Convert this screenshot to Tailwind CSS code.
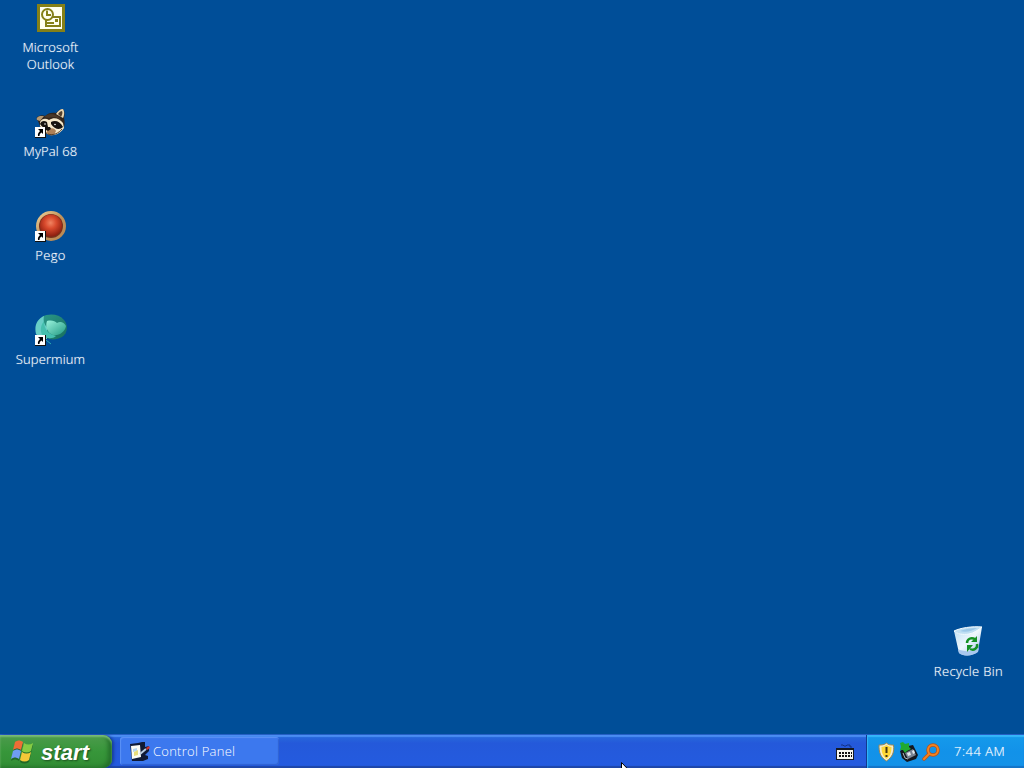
<!DOCTYPE html>
<html lang="en">
<head>
    <meta charset="UTF-8">
    <meta name="viewport" content="width=device-width, initial-scale=1.0">
    <title>Desktop</title>
    <script src="https://cdn.jsdelivr.net/npm/@tailwindcss/browser@4"></script>
</head>
<body class="bg-[#004e98] font-['Open_Sans','Noto_Sans',sans-serif] font-light tracking-[.12px] text-white [text-shadow:0_0_1px_#ffffff90] overflow-hidden select-none">

    <!-- shortcut arrow shared by the desktop icons -->
    <svg class="hidden">
        <symbol id="shortcut" viewBox="0 0 11 11">
            <path d="M0 0h11v11H0z" fill="#111"/>
            <path d="M0 0h10v10H0z" fill="#fff"/>
            <path d="M3 2h5v5L6.500 5.500C5 6.500 4.500 7.500 4.500 9H3C2.500 7 3.500 5.500 5 4z" fill="#000"/>
        </symbol>
    </svg>

    <div class="h-screen flex flex-col">
        <main class="flex-1 flex justify-between">
            <!-- left column -->
            <div class="w-[101px] pt-[2px] flex flex-col">
                <div class="h-[104px] flex flex-col items-center">
                    <svg class="w-8 h-8" viewBox="0 0 32 32">
                        <rect x="2" y="2" width="28" height="28" fill="#858018"/>
                        <rect x="5" y="5" width="22" height="22" fill="#fffff0"/>
                        <g fill="none" stroke="#858018" stroke-width="2">
                            <rect x="11" y="15" width="14" height="9" fill="#fffff0"/>
                            <circle cx="12.500" cy="12.500" r="5.500" fill="#fffff0"/>
                            <path d="M12 8.500V13h4M12 21h7"/>
                        </g>
                        <rect x="20" y="17" width="3" height="3" fill="#858018"/>
                    </svg>
                    <span class="mt-[5px] text-[13px] leading-[17px] text-center">Microsoft<br>Outlook</span>
                </div>

                <div class="h-[104px] flex flex-col items-center">
                    <svg class="w-8 h-8" viewBox="0 0 32 32">
                        <path d="M3 15c-2-2-2-4 1-5 2-1 4-1 6 0 3-3 7-4 11-3 2-2 4-4 7-4 2 2 2 6 1 9 1 4 1 8-1 11-3 3-6 5-11 6-6 0-10-5-12-9z" fill="#33261c"/>
                        <path d="M21 8c2-3 4-5 7-5 2 3 1 7 0 9z" fill="#e9d7b3"/>
                        <path d="M23 8c1-2 3-3 4-3 1 2 0 4-1 6z" fill="#54402d"/>
                        <path d="M2 14c-1-2 0-3 3-4h4l-4 5z" fill="#b79a72"/>
                        <path d="M9 11c4-4 10-4 15 0l3 4c-5-4-9-5-13-3z" fill="#4a3828"/>
                        <path d="M5 16c2-4 6-4 9-2 5-3 10-2 14 3l1 5c-2 3-5 6-10 7-7 0-11-5-14-9z" fill="#f5e8ca"/>
                        <path d="M5 18c1-3 4-4 7-2l1 5c-3 2-5 1-8-3zM16 16c4-2 9-1 12 5-3 3-8 3-12-3z" fill="#17130f"/>
                        <circle cx="10" cy="18" r=".8" fill="#fff"/>
                        <circle cx="20" cy="18.500" r=".8" fill="#fff"/>
                        <path d="M13 24c3-3 7-2 8 1l-2 4c-3 1-6 0-8-2z" fill="#ad8057"/>
                        <path d="M11 21h4l1 2-3 2-2-1z" fill="#17120e"/>
                        <path d="M13 28c5 2 11-1 14-5" fill="none" stroke="#56402a"/>
                        <use href="#shortcut" x="0" y="21" width="11" height="11"/>
                    </svg>
                    <span class="mt-[5px] text-[13px] leading-[17px]">MyPal 68</span>
                </div>

                <div class="h-[104px] flex flex-col items-center">
                    <svg class="w-8 h-8" viewBox="0 0 32 32">
                        <defs>
                            <linearGradient id="rim" x1="0" y1="0" x2="1" y2="1">
                                <stop offset="0" stop-color="#f0d49c"/>
                                <stop offset=".5" stop-color="#c1935b"/>
                                <stop offset="1" stop-color="#b88550"/>
                            </linearGradient>
                            <radialGradient id="ruby" cx=".48" cy=".38" r=".65">
                                <stop offset="0" stop-color="#f08462"/>
                                <stop offset=".4" stop-color="#d94a2d"/>
                                <stop offset="1" stop-color="#84190c"/>
                            </radialGradient>
                        </defs>
                        <circle cx="16" cy="16" r="15" fill="url(#rim)"/>
                        <circle cx="16" cy="16" r="12" fill="#79311c"/>
                        <circle cx="16" cy="15.500" r="11" fill="url(#ruby)"/>
                        <use href="#shortcut" x="0" y="21" width="11" height="11"/>
                    </svg>
                    <span class="mt-[5px] text-[13px] leading-[17px] tracking-[.4px]">Pego</span>
                </div>

                <div class="h-[104px] flex flex-col items-center">
                    <svg class="w-8 h-8" viewBox="0 0 32 32">
                        <defs>
                            <linearGradient id="teal" x1="0" y1="0" x2="1" y2="1">
                                <stop offset="0" stop-color="#2b988a"/>
                                <stop offset="1" stop-color="#176e5c"/>
                            </linearGradient>
                            <linearGradient id="mint" x1="0" y1="0" x2="1" y2="1">
                                <stop offset="0" stop-color="#9af2dc"/>
                                <stop offset="1" stop-color="#219a83"/>
                            </linearGradient>
                        </defs>
                        <path d="M7 3C14-1 24 0 29 6c5 6 3 14-2 17-5 3-12 3-15 1z" fill="url(#teal)"/>
                        <path d="M1 20C-1 12 2 5 9 2c-1 5 0 8 3 11v12H6z" fill="#68cec7"/>
                        <path d="M12 7c5-1 8 0 10 2 3-2 7-1 9 3-1 6-7 10-13 9-6-2-8-9-6-14z" fill="url(#mint)"/>
                        <path d="M9 7c0 8 4 13 12 15-3 3-9 3-13 0C5 18 5 12 9 7z" fill="#45bfae"/>
                        <path d="M11 26l5 4" stroke="#2aaab1"/>
                        <use href="#shortcut" x="0" y="21" width="11" height="11"/>
                    </svg>
                    <span class="mt-[5px] text-[13px] leading-[17px]">Supermium</span>
                </div>
            </div>

            <!-- recycle bin -->
            <div class="self-end w-[112px] h-[108px] flex flex-col items-center">
                <svg class="w-8 h-8" viewBox="0 0 32 32">
                    <defs>
                        <linearGradient id="bin" x1="0" y1="0" x2="1" y2="1">
                            <stop offset="0" stop-color="#b7dcf3"/>
                            <stop offset=".5" stop-color="#eef7fd"/>
                            <stop offset="1" stop-color="#9dc2e6"/>
                        </linearGradient>
                    </defs>
                    <path d="M2 5c3 3 9 4 15 2 5-1 8-4 13-6l-4 24c-4 5-14 6-19 2z" fill="url(#bin)"/>
                    <path d="M2 5c6-3 18-5 28-4-4 3-8 6-13 7-6 1-12 0-15-3z" fill="#bfdff3" stroke="#f3fbff"/>
                    <path d="M8 5c5-2 11-3 17-3-5 3-11 5-17 3z" fill="#9cc8e8"/>
                    <path d="M6 23c5 3 15 3 21-1l-1 4c-5 4-14 5-19 1z" fill="#a9c7ee"/>
                    <g fill="none" stroke="#159125" stroke-width="2.500">
                        <path d="M15 17c0-4 4-6 8-4"/>
                        <path d="M25 18c1 4-3 7-7 5"/>
                    </g>
                    <path d="M25 10v6h-6zM15 19h6l-6 7z" fill="#159125"/>
                </svg>
                <span class="mt-[5px] ml-px text-[13px] leading-[17px] tracking-[.35px]">Recycle Bin</span>
            </div>
        </main>

        <!-- taskbar -->
        <footer class="h-[34px] flex bg-linear-to-b from-[#286bdc] from-0% via-[#2459da] via-25% to-[#245be0] border-t border-[#245fc4] shadow-[inset_0_2px_1px_#4b8df2,inset_0_-2px_1px_#1e46a8]">
            <button class="w-[112px] flex items-center pl-[9px] rounded-r-[9px] bg-linear-to-b from-[#4c9b4c] via-[#37963a] to-[#328e34] shadow-[inset_0_2px_2px_#7abc78,inset_-4px_-1px_4px_#246f2a,2px_0_3px_#173f9c]">
                <svg class="w-[26px] h-[26px]" viewBox="0 0 26 26">
                    <g transform="translate(1 1)" fill="#174d1c" opacity=".6">
                        <path d="M5 4c3-2 5-2 8 0l-2 8c-3-2-5-2-8 0zM14 5c3 2 6 2 9 0l-2 8c-3 2-6 2-9 0zM3 13c3-2 5-2 8 0l-2 8c-3-2-5-2-8 0zM12 14c3 2 6 2 9 0l-2 8c-3 2-6 2-9 0z"/>
                    </g>
                    <path d="M6 3c3-2 5-2 8 0l-2 8c-3-2-5-2-8 0z" fill="#ef6d36"/>
                    <path d="M15 4c3 2 6 2 9 0l-2 8c-3 2-6 2-9 0z" fill="#86cb43"/>
                    <path d="M4 12c3-2 5-2 8 0l-2 8c-3-2-5-2-8 0z" fill="#6f9df2"/>
                    <path d="M13 13c3 2 6 2 9 0l-2 8c-3 2-6 2-9 0z" fill="#f5c838"/>
                </svg>
                <span class="ml-[6px] mt-[2px] font-['Liberation_Sans',sans-serif] font-bold italic text-[22px] leading-[24px] tracking-[.1px] [text-shadow:1px_1px_2px_#1b4f1e]">start</span>
            </button>

            <button class="ml-[8px] mt-[2px] w-[159px] h-[28px] flex items-center rounded-[3px] pl-[9px] bg-[#3c78ee] shadow-[inset_1px_1px_1px_#5b92f5,inset_-1px_-1px_1px_#2f62d2]">
                <svg class="w-[21px] h-[21px]" viewBox="0 0 21 21">
                    <path d="M1 3l8-1 4-1h3v5l4-1v5l-4 4 3 1v3l-5 2H3z" fill="#101a35"/>
                    <path d="M2 5l9-1 1 12-9 2z" fill="#fbfcf4"/>
                    <path d="M4 8l4-1v3l-4 1z" fill="#b7d6ef"/>
                    <path d="M5 11l4-2v5l-4 1z" fill="#e8dd7b"/>
                    <path d="M11 13l6-5" stroke="#b9cbe0" stroke-width="2"/>
                    <path d="M17 7l3-2 1 2-3 2z" fill="#d03634"/>
                </svg>
                <span class="ml-[3px] text-[13px] leading-[17px] tracking-[.25px]">Control Panel</span>
            </button>

            <svg class="ml-auto mr-[12px] mt-[7px] w-[18px] h-[19px]" viewBox="0 0 18 19">
                <path d="M5 3h2l1 1h2l1-1h3v2h2" fill="none" stroke="#123080"/>
                <path d="M0 6h18v12H0z" fill="#151922"/>
                <path d="M1 8h16v9H1z" fill="#f5f5ee"/>
                <path d="M3 11h13M3 14h13" stroke="#111" stroke-width="2" stroke-dasharray="2 1"/>
            </svg>

            <!-- notification area -->
            <div class="w-[158px] flex items-center border-l border-[#12398f] pl-[11px] bg-linear-to-b from-[#159aeb] via-[#1292e9] to-[#1492e8] shadow-[inset_1px_2px_1px_#35b6fa,inset_0_-2px_1px_#1474c7]">
                <svg class="w-[17px] h-[20px]" viewBox="0 0 17 20">
                    <path d="M8.500 1c2 2 4 2 7 2 1 7-1 12-7 16C2 15 1 10 1 3c3 0 5 0 7.500-2z" fill="#f4eccd" stroke="#9a8755"/>
                    <path d="M8.500 3c2 1 3 2 5 2 0 5-1 9-5 12-4-3-5-7-5-12 2 0 3-1 5-2z" fill="#ffd735"/>
                    <path d="M8.500 5v6M8.500 13v2" stroke="#443713" stroke-width="2"/>
                </svg>
                <svg class="ml-[4px] w-[20px] h-[21px]" viewBox="0 0 20 21">
                    <path d="M1 10l8-5 5-1 5 10-2 4-9 3-5-4z" fill="#14171f"/>
                    <path d="M6 12l8-4 3 6-8 4z" fill="#7a8393"/>
                    <path d="M8 12l3-1 1 3-3 1zM13 10l2-1 1 3-2 1z" fill="#e4e8ed"/>
                    <path d="M1 2l3-1 2 2 4-1v4l2 2-4 2-2 2-2-3-3 0 1-3z" fill="#20aa31"/>
                    <path d="M4 12l2 5 3 1" fill="none" stroke="#aeb5bd"/>
                </svg>
                <svg class="ml-[3px] w-[18px] h-[18px]" viewBox="0 0 18 18">
                    <circle cx="11" cy="7" r="5" fill="none" stroke="#b95218" stroke-width="3.500"/>
                    <path d="M7 11l-5 5" stroke="#b95218" stroke-width="3.500" stroke-linecap="round"/>
                    <circle cx="11" cy="7" r="5" fill="none" stroke="#f28321" stroke-width="2"/>
                    <path d="M7 11l-5 5" stroke="#f28321" stroke-width="2" stroke-linecap="round"/>
                </svg>
                <span class="ml-[14px] text-[13px] leading-[17px] tracking-[.5px] whitespace-nowrap">7:44 AM</span>
            </div>
        </footer>
    </div>

    <!-- mouse pointer, its tip just above the bottom edge -->
    <svg class="absolute left-[621px] top-[762px] w-[12px] h-[20px]" viewBox="0 0 12 20">
        <path d="M.5.5v16l4-4 2.500 6 2-1-2.500-5.500h5z" fill="#fff" stroke="#000"/>
    </svg>
</body>
</html>
